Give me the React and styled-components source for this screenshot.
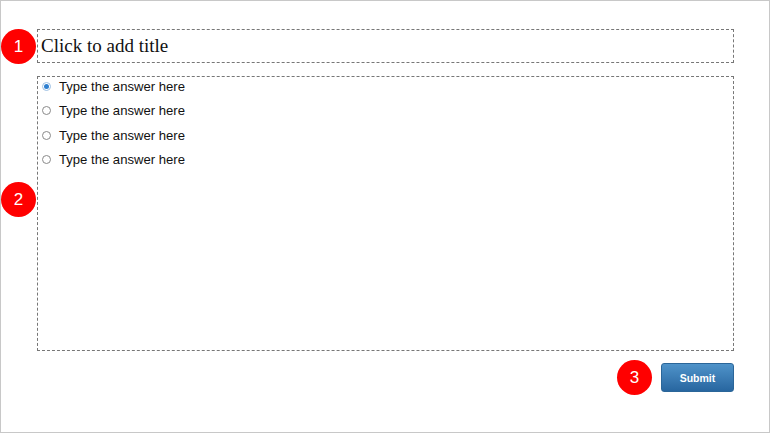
import React from "react";
import styled, { createGlobalStyle } from "styled-components";

const Global = createGlobalStyle`
  html, body { margin: 0; padding: 0; background: #fff; }
  body { font-family: "Liberation Sans", Arial, sans-serif; }
`;

const Frame = styled.div`
  box-sizing: border-box;
  width: 770px;
  height: 433px;
  border: 1px solid #c8c8c8;
  padding: 28px 35px 0 0;
  display: flex;
  flex-direction: column;
`;

const Row = styled.div`
  display: grid;
  grid-template-columns: 36px 1fr;
  margin-top: ${(p) => p.$gap || 0}px;
`;

const Badge = styled.div`
  width: 35px;
  height: 35px;
  border-radius: 50%;
  background: #ff0000;
  color: #fff;
  font-family: "Liberation Sans", Arial, sans-serif;
  font-size: 17px;
  display: flex;
  align-items: center;
  justify-content: center;
  align-self: ${(p) => (p.$top != null ? "start" : "center")};
  margin-top: ${(p) => p.$top || 0}px;
`;

const TitleBox = styled.div`
  box-sizing: border-box;
  height: 34px;
  border: 1px dashed #777;
  padding: 5px 3px;
  font-family: "Liberation Serif", "Times New Roman", serif;
  font-size: 19px;
  line-height: 21px;
  color: #111;
`;

const AnswerBox = styled.div`
  box-sizing: border-box;
  height: 275px;
  border: 1px dashed #777;
  padding: 0 3px;
  display: flex;
  flex-direction: column;
  gap: 6.5px;
`;

const Option = styled.label`
  display: flex;
  align-items: center;
  height: 18px;
  font-size: 13.1px;
  color: #111;
  font-family: "Liberation Sans", Arial, sans-serif;
`;

const Radio = styled.span`
  box-sizing: border-box;
  width: 9px;
  height: 9px;
  border-radius: 50%;
  border: 1px solid ${(p) => (p.$checked ? "#9cc0e4" : "#8a8a8a")};
  background: #fff;
  margin: 0 8px 0 1px;
  display: flex;
  align-items: center;
  justify-content: center;
  &::after {
    content: "";
    display: ${(p) => (p.$checked ? "block" : "none")};
    width: 5px;
    height: 5px;
    border-radius: 50%;
    background: #2d7fd0;
  }
`;

const Footer = styled.div`
  display: flex;
  justify-content: flex-end;
  align-items: center;
  gap: 9px;
  margin-top: 9px;
`;

const SubmitButton = styled.button`
  box-sizing: border-box;
  width: 73px;
  height: 29px;
  border: 1px solid #2b6699;
  border-radius: 3px;
  background: linear-gradient(#4f93c9, #2866a0);
  color: #fff;
  font-family: "Liberation Sans", Arial, sans-serif;
  font-weight: bold;
  font-size: 10.5px;
  padding: 0;
  cursor: pointer;
`;

const answers = [true, false, false, false];

export default function App() {
  return (
    <>
      <Global />
      <Frame>
        <Row>
          <Badge>1</Badge>
          <TitleBox>Click to add title</TitleBox>
        </Row>
        <Row $gap={12}>
          <Badge $top={106}>2</Badge>
          <AnswerBox>
            {answers.map((c, i) => (
              <Option key={i}>
                <Radio $checked={c} />
                Type the answer here
              </Option>
            ))}
          </AnswerBox>
        </Row>
        <Footer>
          <Badge>3</Badge>
          <SubmitButton>Submit</SubmitButton>
        </Footer>
      </Frame>
    </>
  );
}
